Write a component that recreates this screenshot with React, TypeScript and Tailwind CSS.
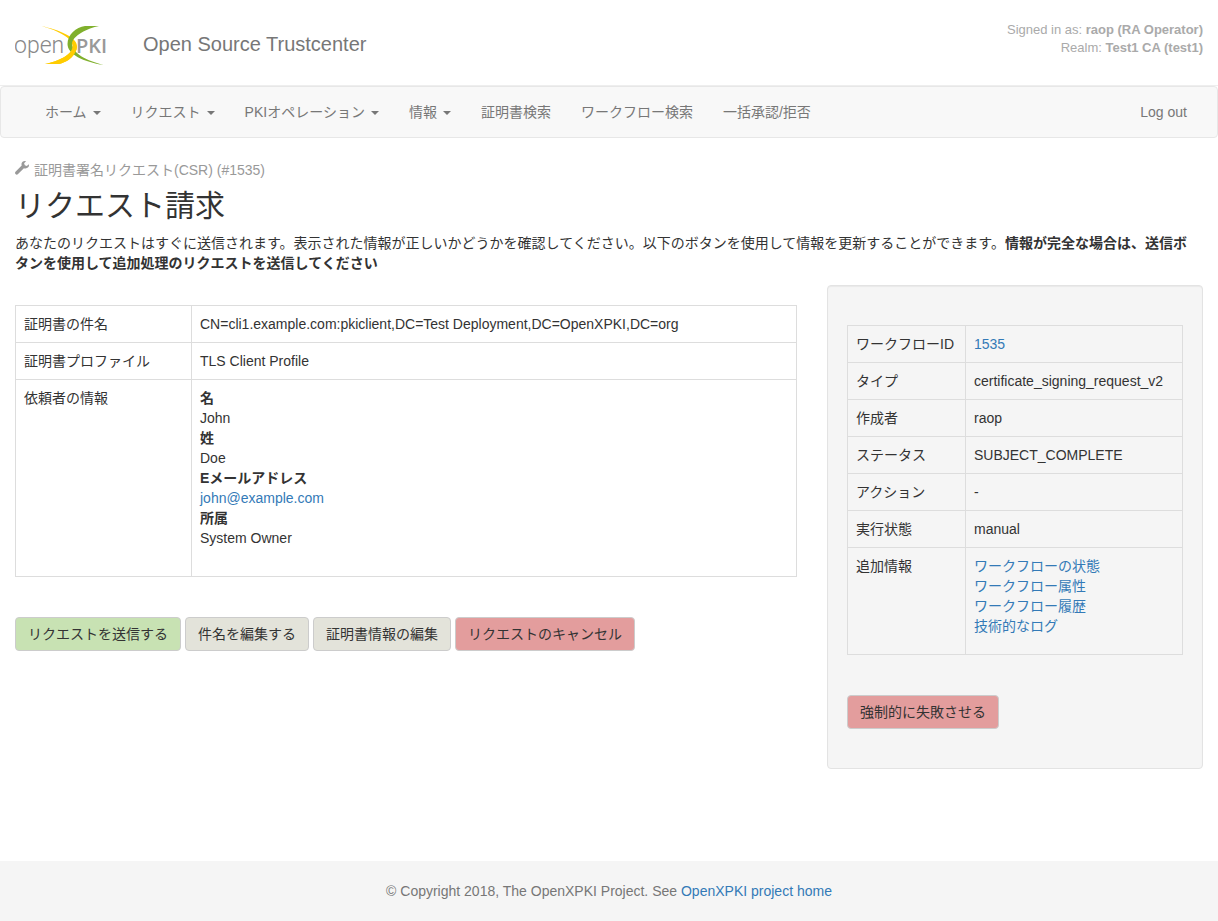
import type { ReactNode } from "react";

const navItems = [
  { href: "#home", label: "ホーム", menu: true },
  { href: "#request", label: "リクエスト", menu: true },
  { href: "#operations", label: "PKIオペレーション", menu: true },
  { href: "#info", label: "情報", menu: true },
  { href: "#certsearch", label: "証明書検索", menu: false },
  { href: "#wfsearch", label: "ワークフロー検索", menu: false },
  { href: "#bulk", label: "一括承認/拒否", menu: false },
];

const requestor = [
  { label: "名", value: "John" },
  { label: "姓", value: "Doe" },
  { label: "Eメールアドレス", value: <TextLink href="mailto:john@example.com">john@example.com</TextLink> },
  { label: "所属", value: "System Owner" },
];

const workflowLinks = [
  { href: "#context", label: "ワークフローの状態" },
  { href: "#attributes", label: "ワークフロー属性" },
  { href: "#history", label: "ワークフロー履歴" },
  { href: "#log", label: "技術的なログ" },
];

const workflowRows: { label: string; value: ReactNode }[] = [
  { label: "ワークフローID", value: <TextLink href="#1535">1535</TextLink> },
  { label: "タイプ", value: "certificate_signing_request_v2" },
  { label: "作成者", value: "raop" },
  { label: "ステータス", value: "SUBJECT_COMPLETE" },
  { label: "アクション", value: "-" },
  { label: "実行状態", value: "manual" },
];

const actions = [
  { label: "リクエストを送信する", color: "bg-[#c8e2b3]" },
  { label: "件名を編集する", color: "bg-[#e3e3da]" },
  { label: "証明書情報の編集", color: "bg-[#e3e3da]" },
  { label: "リクエストのキャンセル", color: "bg-[#e39d9d]" },
];

function TextLink({ href, children }: { href: string; children: ReactNode }) {
  return <a href={href} className="text-[#337ab7] hover:underline">{children}</a>;
}

function Button({ color, children }: { color: string; children: ReactNode }) {
  return (
    <button type="button" className={`rounded-sm border border-[#ccc] px-3 py-1.5 leading-5 whitespace-nowrap ${color}`}>
      {children}
    </button>
  );
}

function Row({ label, children }: { label: string; children: ReactNode }) {
  return (
    <tr>
      <th scope="row" className="border border-[#ddd] p-2 text-left align-top font-normal whitespace-nowrap">{label}</th>
      <td className="border border-[#ddd] p-2 align-top">{children}</td>
    </tr>
  );
}

function Logo() {
  return (
    <svg viewBox="0 0 92 42" className="h-[42px] w-[92px]" role="img" aria-label="openXPKI">
      <text x="-1" y="29" fontSize="23" fill="#888" fontFamily="Roboto, sans-serif" fontWeight="300">open</text>
      <text x="61" y="29" fontSize="20" fill="#999" fontFamily="'Open Sans', sans-serif" fontWeight="600">PKI</text>
      <path d="M26.5 2C44 6 62 13 62 22C62 32 50 40 42 40H30C44 37 57.5 31 57.5 22C57.5 14 44 7 26.5 2Z" fill="#fc0" />
      <path d="M84 2C73 4 57 12 57 20C57 29 72 37 89 41C68 38 52.5 30 52.5 20C52.5 11 61 3 70 2Z" fill="#80b02d" />
      <path d="M62 22C62 32 50 40 42 40H30C44 37 57.5 31 57.5 22Z" fill="#fc0" />
    </svg>
  );
}

function Wrench() {
  return (
    <svg viewBox="0 0 14 14" className="mb-1 inline-block size-3.5" fill="currentColor" aria-hidden="true">
      <path d="M13.8 3.2L11.8 5.1L9.8 4.3L9.1 2.3L11 .3C9.2-.3 7.3.5 6.7 2.1C6.4 3 6.5 3.8 6.7 4.6L.5 10.8C-.1 11.4-.1 12.4.5 13.1C1.2 13.8 2.2 13.8 2.8 13.2L8.9 7.2C9.8 7.6 11 7.7 12 7.1C13.6 6.4 14.3 4.8 13.8 3.2Z" />
    </svg>
  );
}

export default function App() {
  return (
    <div className="flex min-h-screen flex-col bg-white font-['Liberation_Sans','Noto_Sans_CJK_JP',sans-serif] text-sm leading-5 text-[#333]">
      <header className="flex items-start justify-between border-b border-[#eee] px-[15px] pt-[21px] pb-2">
        <div className="flex items-center gap-9 pt-[3px] pb-[11px]">
          <Logo />
          <span className="pb-0.5 text-xl leading-6 text-[#777]">Open Source Trustcenter</span>
        </div>
        <div className="text-right text-[13px] leading-[18px] text-[#aaa]">
          <div>Signed in as: <b>raop (RA Operator)</b></div>
          <div>Realm: <b>Test1 CA (test1)</b></div>
        </div>
      </header>

      <nav className="flex items-center justify-between rounded border border-[#e7e7e7] bg-[#f8f8f8] px-[15px] text-[#777]">
        <ul className="flex pl-[14px]">
          {navItems.map((item) => (
            <li key={item.href}>
              <a href={item.href} className="flex items-center gap-1.5 px-[15px] py-[15px] hover:text-[#333]">
                {item.label}
                {item.menu && <span className="mt-0.5 border-x-4 border-t-4 border-x-transparent border-t-current" />}
              </a>
            </li>
          ))}
        </ul>
        <a href="#logout" className="p-[15px] hover:text-[#333]">Log out</a>
      </nav>

      <main className="flex-1 px-[15px] pt-[22px]">
        <div className="flex items-center gap-[5px] text-[#999]"><Wrench />証明書署名リクエスト(CSR) (#1535)</div>
        <h1 className="mt-2 text-3xl leading-9">リクエスト請求</h1>
        <p className="mt-[9px] pr-2">
          あなたのリクエストはすぐに送信されます。表示された情報が正しいかどうかを確認してください。以下のボタンを使用して情報を更新することができます。<b>情報が完全な場合は、送信ボタンを使用して追加処理のリクエストを送信してください</b>
        </p>

        <div className="-mx-[15px] mt-3 flex">
          <section className="w-2/3 px-[15px] pt-5">
            <table className="w-full border-collapse">
              <colgroup>
                <col className="w-[176px]" />
                <col />
              </colgroup>
              <tbody>
                <Row label="証明書の件名">CN=cli1.example.com:pkiclient,DC=Test Deployment,DC=OpenXPKI,DC=org</Row>
                <Row label="証明書プロファイル">TLS Client Profile</Row>
                <Row label="依頼者の情報">
                  <dl className="mb-5">
                    {requestor.map((item) => (
                      <div key={item.label}>
                        <dt className="font-bold">{item.label}</dt>
                        <dd>{item.value}</dd>
                      </div>
                    ))}
                  </dl>
                </Row>
              </tbody>
            </table>
            <div className="mt-10 flex flex-wrap gap-1">
              {actions.map((action) => (
                <Button key={action.label} color={action.color}>{action.label}</Button>
              ))}
            </div>
          </section>

          <div className="w-1/3 px-[15px]">
            <aside className="rounded border border-[#e3e3e3] bg-[#f5f5f5] px-[19px] py-[39px] shadow-[inset_0_1px_1px_rgba(0,0,0,0.05)]">
              <table className="w-full border-collapse">
                <colgroup>
                  <col className="w-[118px]" />
                  <col />
                </colgroup>
                <tbody>
                  {workflowRows.map((row) => (
                    <Row key={row.label} label={row.label}>{row.value}</Row>
                  ))}
                  <Row label="追加情報">
                    <ul className="mb-[10px]">
                      {workflowLinks.map((link) => (
                        <li key={link.href}><TextLink href={link.href}>{link.label}</TextLink></li>
                      ))}
                    </ul>
                  </Row>
                </tbody>
              </table>
              <div className="mt-10">
                <Button color="bg-[#e39d9d]">強制的に失敗させる</Button>
              </div>
            </aside>
          </div>
        </div>
      </main>

      <footer className="bg-[#f5f5f5] py-5 text-center text-[#777]">
        © Copyright 2018, The OpenXPKI Project. See <TextLink href="#project">OpenXPKI project home</TextLink>
      </footer>
    </div>
  );
}
